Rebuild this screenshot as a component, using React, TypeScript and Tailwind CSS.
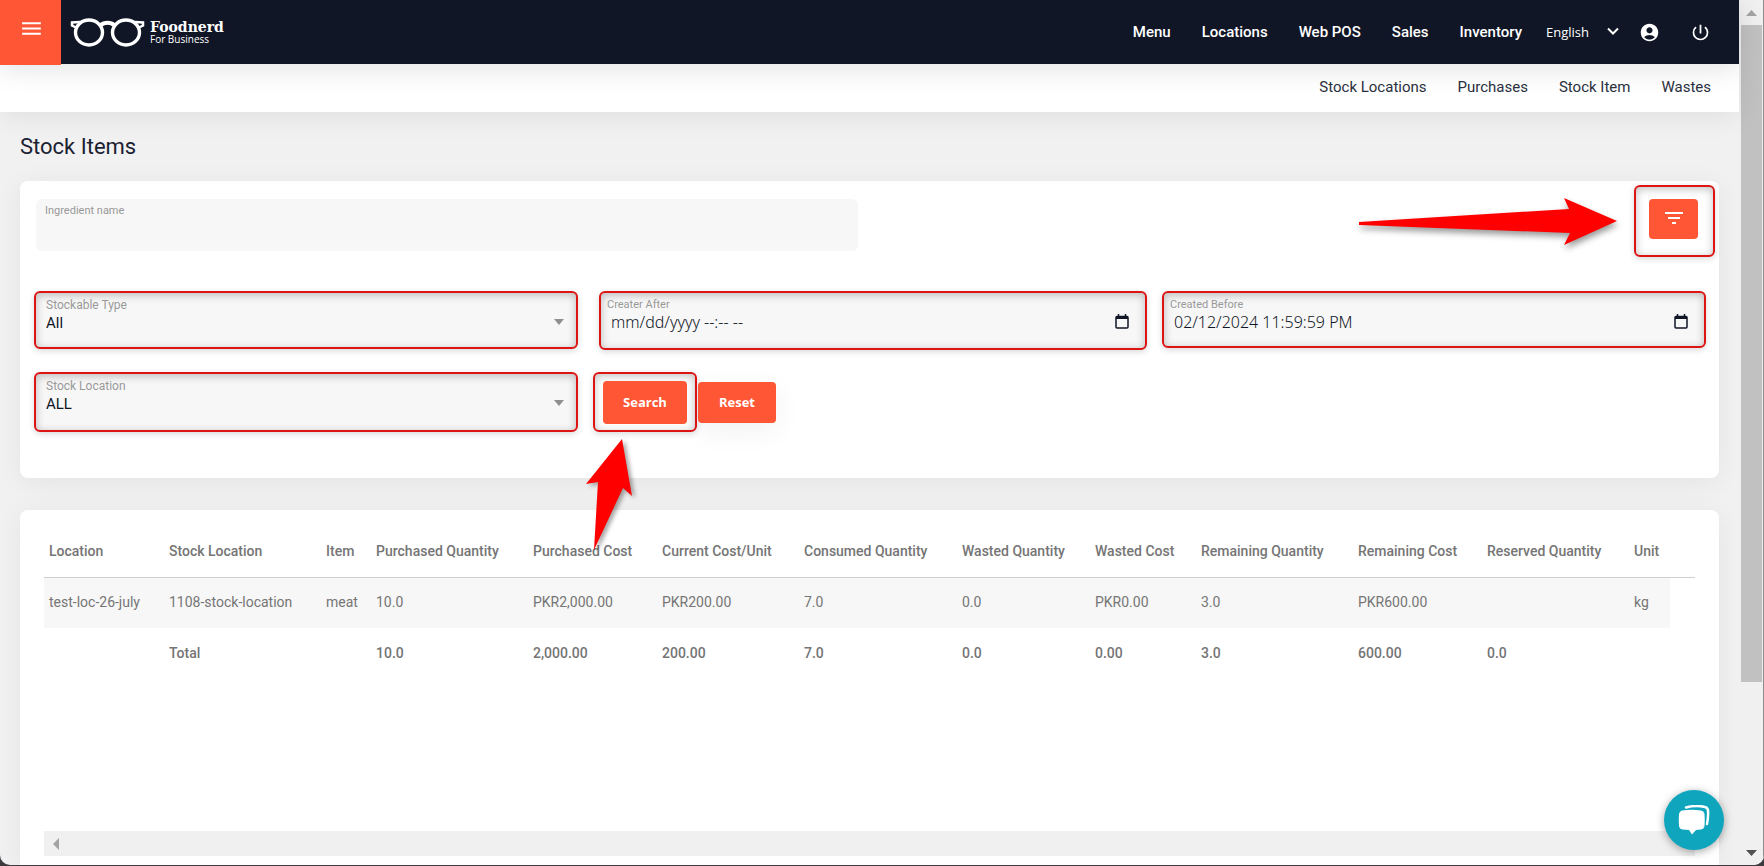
import { useState } from "react";
import { MdAccountCircle, MdFilterList, MdMenu, MdPowerSettingsNew } from "react-icons/md";

/* ─── Data ─── */
const mainNav = ["Menu", "Locations", "Web POS", "Sales", "Inventory"];
const subNav = ["Stock Locations", "Purchases", "Stock Item", "Wastes"];

const columns = [
  { label: "Location", width: "w-[120px]" },
  { label: "Stock Location", width: "w-[157px]" },
  { label: "Item", width: "w-[50px]" },
  { label: "Purchased Quantity", width: "w-[157px]" },
  { label: "Purchased Cost", width: "w-[129px]" },
  { label: "Current Cost/Unit", width: "w-[142px]" },
  { label: "Consumed Quantity", width: "w-[158px]" },
  { label: "Wasted Quantity", width: "w-[133px]" },
  { label: "Wasted Cost", width: "w-[106px]" },
  { label: "Remaining Quantity", width: "w-[157px]" },
  { label: "Remaining Cost", width: "w-[129px]" },
  { label: "Reserved Quantity", width: "w-[147px]" },
  { label: "Unit", width: "w-[41px]" },
];

const rows = [
  [
    "test-loc-26-july",
    "1108-stock-location",
    "meat",
    "10.0",
    "PKR2,000.00",
    "PKR200.00",
    "7.0",
    "0.0",
    "PKR0.00",
    "3.0",
    "PKR600.00",
    "",
    "kg",
  ],
];

const totals = ["", "Total", "", "10.0", "2,000.00", "200.00", "7.0", "0.0", "0.00", "3.0", "600.00", "0.0", ""];

const outline =
  "rounded-md border-2 border-[#dc1414] shadow-[0_2px_6px_rgba(0,0,0,0.15),inset_0_2px_8px_rgba(0,0,0,0.25)]";

/* ─── Logo ─── */
function Logo() {
  return (
    <a href="#" className="flex items-center gap-1 text-white" aria-label="Foodnerd For Business">
      <svg width="76" height="30" viewBox="0 0 76 30" fill="none" stroke="currentColor" aria-hidden="true">
        <ellipse cx="19" cy="15.500" rx="13.5" ry="12.5" strokeWidth="3.4" />
        <ellipse cx="56" cy="15.500" rx="13.5" ry="12.5" strokeWidth="3.4" />
        <path d="M31 8C34 5 41 5 44 8" strokeWidth="4" />
        <path d="M10 5L2 5.5V8.5L6 10.500M65 5L73 5.5V8.5L69 10.500" strokeWidth="2.5" />
      </svg>
      <span className="flex flex-col">
        <span className="font-['DejaVu_Serif'] text-[14px] leading-[14px] font-bold">Foodnerd</span>
        <span className="font-['Open_Sans'] text-[10px] leading-[10px]">For Business</span>
      </span>
    </a>
  );
}

/* ─── Header ─── */
function Header() {
  return (
    <header className="relative z-20 flex h-16 items-center bg-[#101626] shadow-[0_4px_28px_rgba(0,0,0,0.12)]">
      <button
        aria-label="Toggle menu"
        className="flex h-[65px] w-[61px] shrink-0 justify-center self-start bg-[#ff5635] pt-4 pl-0.5 text-white"
      >
        <MdMenu size={25} />
      </button>
      <div className="ml-[9px]">
        <Logo />
      </div>
      <nav className="ml-auto flex items-center text-[15px] text-white" aria-label="Main">
        <div className="flex gap-[31px] font-medium">
          {mainNav.map((item) => (
            <a key={item} href="#">
              {item}
            </a>
          ))}
        </div>
        <div className="relative ml-6">
          <select
            aria-label="Language"
            className="w-[77px] appearance-none bg-transparent font-['Open_Sans'] text-[13px] text-white outline-none"
            defaultValue="English"
          >
            <option>English</option>
          </select>
          <svg
            className="pointer-events-none absolute top-1.5 right-1"
            width="12"
            height="9"
            viewBox="0 0 12 9"
            fill="none"
            stroke="currentColor"
            strokeWidth="2"
            aria-hidden="true"
          >
            <path d="M1 1.5L6 6.5L11 1.5" />
          </svg>
        </div>
        <button aria-label="Account" className="ml-4">
          <MdAccountCircle size={21} />
        </button>
        <button aria-label="Log out" className="mr-7 ml-[30px]">
          <MdPowerSettingsNew size={21} />
        </button>
      </nav>
    </header>
  );
}

function SubNav() {
  return (
    <nav
      className="relative z-10 flex h-12 items-center justify-end gap-[31px] bg-white pr-7 pb-0.5 text-[15px] text-[#2b3040] shadow-[0_4px_28px_rgba(0,0,0,0.08)]"
      aria-label="Inventory"
    >
      {subNav.map((item) => (
        <a key={item} href="#">
          {item}
        </a>
      ))}
    </nav>
  );
}

/* ─── Fields ─── */
function SelectField({ id, label, value }: { id: string; label: string; value: string }) {
  return (
    <div className={`relative bg-[#f7f7f7] px-2.5 pt-1 ${outline}`}>
      <label htmlFor={id} className="block text-[12px] leading-4 text-[#999]">
        {label}
      </label>
      <select
        id={id}
        className="block w-full appearance-none bg-transparent text-[15px] leading-5 text-[#101626] outline-none"
        defaultValue={value}
      >
        <option>{value}</option>
      </select>
      <svg
        className="pointer-events-none absolute top-[26px] right-3"
        width="10"
        height="6"
        viewBox="0 0 10 6"
        fill="#8f8f8f"
        aria-hidden="true"
      >
        <path d="M0 0H10L5 6Z" />
      </svg>
    </div>
  );
}

function DateField({ id, label, value }: { id: string; label: string; value: string }) {
  return (
    <div className={`relative flex flex-col bg-[#f7f7f7] px-1.5 pt-1.5 ${outline}`}>
      <label htmlFor={id} className="text-[11px] leading-3 text-[#999]">
        {label}
      </label>
      <input
        id={id}
        className="w-full bg-transparent px-1 font-['Noto_Sans'] text-[16px] leading-4 font-light text-[#101626] outline-none"
        defaultValue={value}
      />
      <svg
        className="pointer-events-none absolute top-[21px] right-4"
        width="14"
        height="15"
        viewBox="0 0 14 15"
        fill="none"
        stroke="#101626"
        aria-hidden="true"
      >
        <rect x="1" y="2.5" width="12" height="11.5" rx="1" strokeWidth="1.5" />
        <path d="M1 3.5H13" strokeWidth="3" />
        <path d="M3.5 0V3M10.5 0V3" strokeWidth="1.5" />
      </svg>
    </div>
  );
}

/* ─── Filters ─── */
function Filters() {
  const [name, setName] = useState("");

  return (
    <section className="relative h-[297px] rounded-lg bg-white pt-[18px] pr-[13px] pl-[14px] shadow-[0_4px_28px_rgba(0,0,0,0.06)]">
      <div className="flex justify-between pl-0.5">
        <div className="h-[52px] w-[822px] rounded-md bg-[#f7f7f7] px-[9px] pt-1">
          <label htmlFor="ingredient" className="block text-[11px] leading-4 text-[#999]">
            Ingredient name
          </label>
          <input
            id="ingredient"
            value={name}
            onChange={(e) => setName(e.target.value)}
            className="block w-full bg-transparent text-[15px] outline-none"
          />
        </div>
        <button
          aria-label="Toggle filters"
          className="mr-2 flex h-10 w-[49px] justify-center rounded bg-[#ff5635] pt-[7px] text-white"
        >
          <MdFilterList size={24} />
        </button>
      </div>
      {/* Marker round the filter button */}
      <div className={`pointer-events-none absolute top-1 right-1 h-[72px] w-[81px] ${outline}`} />
      <svg
        className="pointer-events-none absolute top-[14px] right-[99px] drop-shadow-[1px_4px_3px_rgba(0,0,0,0.4)]"
        width="262"
        height="54"
        viewBox="0 0 262 54"
        aria-hidden="true"
      >
        <path d="M1 27L211 14L206 3L259 26L206 50L212 38L1 30Z" fill="#ff0000" />
      </svg>

      <div className="mt-10 grid grid-cols-[544fr_554fr_544fr] items-start gap-x-[15px] gap-y-[22px]">
        <div className="grid h-[58px]">
          <SelectField id="type" label="Stockable Type" value="All" />
        </div>
        <div className="ml-1.5 grid h-[59px]">
          <DateField id="after" label="Creater After" value="mm/dd/yyyy --:-- --" />
        </div>
        <div className="grid h-[57px]">
          <DateField id="before" label="Created Before" value="02/12/2024 11:59:59 PM" />
        </div>
        <div className="grid h-[60px]">
          <SelectField id="location" label="Stock Location" value="ALL" />
        </div>
        <div className="relative flex items-start">
          <div className={`px-2 pt-[7px] pb-1.5 ${outline}`}>
            <button className="block h-[43px] w-[84px] rounded bg-[#ff5635] font-['Open_Sans'] text-[13px] font-bold text-white">
              Search
            </button>
          </div>
          <button className="mt-2.5 ml-px h-[41px] w-[78px] rounded bg-[#ff5635] font-['Open_Sans'] text-[13px] font-bold text-white shadow-[0_8px_28px_rgba(0,0,0,0.06)]">
            Reset
          </button>
          <svg
            className="pointer-events-none absolute top-[66px] -left-[8px] drop-shadow-[3px_2px_2px_rgba(0,0,0,0.35)]"
            width="50"
            height="114"
            viewBox="0 0 50 114"
            aria-hidden="true"
          >
            <path d="M37 1L47 58L38 50L9 112L13 44L1 46Z" fill="#ff0000" />
          </svg>
        </div>
      </div>
    </section>
  );
}

/* ─── Stock table ─── */
function StockTable() {
  return (
    <section className="flex flex-1 flex-col rounded-t-lg bg-white px-6 pt-4 pb-[9px] shadow-[0_4px_28px_rgba(0,0,0,0.06)]">
      <div className="flex-1 overflow-hidden">
        <table className="w-full min-w-[1626px] table-fixed text-left text-[14px] text-[#757575]">
          <thead>
            <tr className="h-[51px] border-b border-[#cfcfcf]">
              {columns.map((col) => (
                <th key={col.label} className={`pl-[5px] font-medium whitespace-nowrap ${col.width}`}>
                  {col.label}
                </th>
              ))}
              <th />
            </tr>
          </thead>
          <tbody>
            {rows.map((row) => (
              <tr key={row[0]} className="h-[51px]">
                {row.map((cell, i) => (
                  <td key={i} className="bg-[#f7f7f7] pl-[5px] whitespace-nowrap">
                    {cell}
                  </td>
                ))}
                <td />
              </tr>
            ))}
            <tr className="h-[51px] font-medium">
              {totals.map((cell, i) => (
                <td key={i} className="pl-[5px]">
                  {cell}
                </td>
              ))}
              <td />
            </tr>
          </tbody>
        </table>
      </div>
      {/* Horizontal scroll track */}
      <div className="flex h-[25px] items-center bg-[#f0f0f0] pl-[9px]">
        <svg width="6" height="12" viewBox="0 0 6 12" fill="#a3a3a3" aria-hidden="true">
          <path d="M6 0V12L0 6Z" />
        </svg>
      </div>
    </section>
  );
}

/* ─── Window scrollbar ─── */
function Scrollbar() {
  return (
    <div className="flex w-[25px] shrink-0 flex-col items-center border-r border-[#8c8c8c] bg-[#f0f0f0]" aria-hidden="true">
      <div className="flex h-[25px] items-center">
        <svg width="11" height="6" viewBox="0 0 11 6" fill="#a3a3a3">
          <path d="M0 6H11L5.5 0Z" />
        </svg>
      </div>
      <div className="h-[657px] w-[21px] bg-[#c1c1c1]" />
      <div className="mt-auto flex h-[25px] items-center">
        <svg width="11" height="6" viewBox="0 0 11 6" fill="#505050">
          <path d="M0 0H11L5.5 6Z" />
        </svg>
      </div>
    </div>
  );
}

function ChatButton() {
  return (
    <button
      aria-label="Open chat"
      className="fixed right-10 bottom-4 z-30 flex size-[60px] items-center justify-center rounded-full bg-[#0fa5bd] shadow-[0_2px_8px_rgba(0,0,0,0.35)]"
    >
      <svg width="32" height="30" viewBox="0 0 32 30" aria-hidden="true">
        <path
          d="M8 2.5C14 .8 22 .8 27 2Q29.500 2.500 30 5.500Q30.500 12 29 19"
          fill="none"
          stroke="#fff"
          strokeWidth="2.5"
          strokeLinecap="round"
        />
        <path
          d="M4 5.500Q14 4 23 5.500Q26 6 26.500 9Q27 15 26.500 21Q26 24 23 24.500L18 25L14 29.500L11 25L4.500 24.500Q1.500 24 1 21Q.5 15 1 9Q1.500 6 4 5.500Z"
          fill="#fff"
        />
      </svg>
    </button>
  );
}

/* ─── Page ─── */
export default function App() {
  return (
    <div className="min-h-screen bg-[#3c3c40] pb-px font-[Roboto,sans-serif]">
      <div className="flex min-h-[calc(100vh-1px)] overflow-hidden rounded-b-[10px] bg-[#f1f1f1]">
        <div className="flex min-w-0 flex-1 flex-col">
          <Header />
          <SubNav />
          <main className="flex flex-1 flex-col px-5">
            <h1 className="pt-[19px] pb-[18px] text-[22px] leading-8 text-[#1b2131]">Stock Items</h1>
            <Filters />
            <div className="h-8 shrink-0" />
            <StockTable />
          </main>
        </div>
        <Scrollbar />
      </div>
      <ChatButton />
    </div>
  );
}
